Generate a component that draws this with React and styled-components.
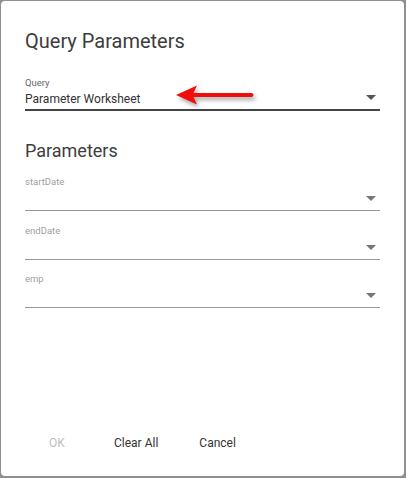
import React from "react";
import styled, { createGlobalStyle } from "styled-components";

const GlobalStyle = createGlobalStyle`
  html, body {
    margin: 0;
    padding: 0;
    background: #8f8f8f;
  }
  body {
    font-family: Roboto, "Liberation Sans", Arial, sans-serif;
  }
`;

const Dialog = styled.div`
  box-sizing: border-box;
  display: flex;
  flex-direction: column;
  width: 403px;
  height: 475px;
  margin: 1px 0 0 1px;
  padding: 28px 24px 15px 24px;
  background: #fff;
  border-radius: 4px;
`;

const Title = styled.h2`
  margin: 0;
  font-size: 20px;
  line-height: 24px;
  font-weight: 400;
  color: #3d3d3d;
`;

const Heading = styled.h3`
  margin: 29px 0 0;
  font-size: 18px;
  line-height: 22px;
  font-weight: 400;
  color: #3d3d3d;
`;

const Field = styled.div`
  margin-top: ${(p) => p.$top}px;
`;

const Label = styled.div`
  font-size: 9.5px;
  line-height: 12px;
  color: ${(p) => (p.$filled ? "#666" : "#a0a0a0")};
`;

const SelectRow = styled.div`
  position: relative;
  display: flex;
  align-items: flex-end;
  justify-content: space-between;
  min-height: ${(p) => (p.$filled ? 18 : 22)}px;
  margin-top: ${(p) => (p.$filled ? 2 : 0)}px;
  border-bottom: ${(p) => (p.$filled ? "2px solid #444" : "1px solid #999")};
`;

const Value = styled.span`
  font-size: 12px;
  line-height: 16px;
  color: #333;
  padding-bottom: 2px;
`;

const Caret = styled.svg`
  display: block;
  margin: 0 4px 9px 0;
  fill: ${(p) => (p.$filled ? "#555" : "#777")};
`;

const Pointer = styled.svg`
  position: absolute;
  left: 145px;
  top: -9px;
  filter: drop-shadow(2px 3px 2px rgba(0, 0, 0, 0.35));
`;

const Actions = styled.div`
  display: flex;
  gap: 9px;
  margin-top: auto;
`;

const Button = styled.button`
  min-width: 64px;
  height: 36px;
  padding: 0 16px;
  border: none;
  background: transparent;
  font-family: inherit;
  font-size: 12px;
  line-height: 36px;
  color: ${(p) => (p.disabled ? "#bdbdbd" : "#333")};
  cursor: ${(p) => (p.disabled ? "default" : "pointer")};
`;

const DropCaret = ({ filled }) => (
  <Caret $filled={filled} width="10" height="5" viewBox="0 0 10 5">
    <path d="M0 0l5 5 5-5z" />
  </Caret>
);

const RedArrow = () => (
  <Pointer width="92" height="28" viewBox="0 0 92 28">
    <path
      d="M6 13 L27 3.5 L23.5 11 L82 11 Q85 13 82 15 L23.5 15 L27 22.5 Z"
      fill="#f20d0d"
    />
  </Pointer>
);

const params = ["startDate", "endDate", "emp"];

const App = () => {
  return (
    <>
      <GlobalStyle />
      <Dialog>
        <Title>Query Parameters</Title>
        <Field $top={24}>
          <Label $filled>Query</Label>
          <SelectRow $filled>
            <Value>Parameter Worksheet</Value>
            <DropCaret filled />
            <RedArrow />
          </SelectRow>
        </Field>

        <Heading>Parameters</Heading>
        {params.map((name, i) => (
          <Field key={name} $top={i === 0 ? 14 : 13.5}>
            <Label>{name}</Label>
            <SelectRow>
              <span />
              <DropCaret />
            </SelectRow>
          </Field>
        ))}

        <Actions>
          <Button disabled>OK</Button>
          <Button>Clear All</Button>
          <Button>Cancel</Button>
        </Actions>
      </Dialog>
    </>
  );
};

export default App;
